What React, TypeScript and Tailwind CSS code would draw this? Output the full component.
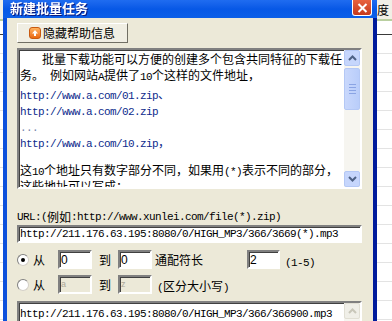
import React from 'react'

const cjk = "font-['Noto_Sans_CJK_SC',sans-serif]"

// SimSun-like mix: half-width Latin in a mono face, Chinese in the CJK face
const Mixed = ({ text }: { text: string }) => (
  <>
    {text
      .split(/([\x20-\x7e]+)/)
      .filter(Boolean)
      .map((part, i) =>
        /^[\x20-\x7e]+$/.test(part) ? (
          <span key={i} className="font-['Liberation_Mono',monospace] text-[11px] tracking-[-0.6px] whitespace-pre">
            {part}
          </span>
        ) : (
          <span key={i} className={`${cjk} text-[12px]`}>
            {part}
          </span>
        )
      )}
  </>
)

const BgStrip = ({ className, label }: { className: string; label?: string }) => (
  <div className={`flex flex-col h-full bg-white overflow-hidden ${className}`}>
    <div className="h-[19px] shrink-0 bg-[#f1efe6] text-[12px] leading-[19px] text-black whitespace-nowrap overflow-hidden">
      {label && <span className={cjk}>{label}</span>}
    </div>
    <div className="h-[2px] shrink-0 bg-[#b9cfa0]" />
    <div className="h-[14px] shrink-0 border-b border-[#3a3a3a]" />
    {Array.from({ length: 15 }).map((_, i) => (
      <div key={i} className="h-[19px] shrink-0 border-b border-[#e3e3e3]" />
    ))}
  </div>
)

const Sunken = ({ className, children }: { className: string; children?: React.ReactNode }) => (
  <div
    className={`border-2 border-t-[#808080] border-l-[#808080] border-b-white border-r-white shadow-[inset_1px_1px_0_#404040] ${className}`}
  >
    {children}
  </div>
)

const ScrollArrow = ({ up, disabled }: { up?: boolean; disabled?: boolean }) => (
  <div
    className={`w-[16px] h-[16px] rounded-[2px] border flex items-center justify-center ${
      disabled ? 'bg-[#f0efe8] border-[#e1dfd4]' : 'bg-[#c6d6fc] border-[#b4c8f5]'
    }`}
  >
    <svg width="9" height="6" viewBox="0 0 9 6">
      <path
        d={up ? 'M1 5 L4.5 1.5 L8 5' : 'M1 1 L4.5 4.5 L8 1'}
        fill="none"
        stroke={disabled ? '#c9c7ba' : '#4d6185'}
        strokeWidth="2"
      />
    </svg>
  </div>
)

const Radio = ({ checked }: { checked?: boolean }) => (
  <div className="w-[12px] h-[12px] rounded-full border border-t-[#808080] border-l-[#808080] border-b-[#d4d0c8] border-r-[#d4d0c8] bg-white flex items-center justify-center">
    {checked && <div className="w-[4px] h-[4px] rounded-full bg-black" />}
  </div>
)

const Field = ({ value, disabled, w }: { value: string; disabled?: boolean; w: string }) => (
  <Sunken className={`${w} h-[19px] flex items-center pl-[1px] ${disabled ? 'bg-[#ece9d8]' : 'bg-white'}`}>
    <span
      className={`font-['Liberation_Sans',sans-serif] ${disabled ? 'text-[9px] text-[#aca899]' : 'text-[12px] text-black'}`}
    >
      {value}
    </span>
  </Sunken>
)

export default function App() {
  return (
    <div className="w-[392px] h-[321px] overflow-hidden flex bg-white text-black">
      <BgStrip className="w-[3px] shrink-0" />

      <div className="w-[374px] shrink-0 flex flex-col h-full">
        {/* title bar */}
        <div className="h-[18px] shrink-0 bg-gradient-to-b from-[#1f6cf0] via-[#0758e6] to-[#0b5fe8] flex items-start justify-between pl-[7px] pr-[5px]">
          <span className={`${cjk} text-[13px] font-bold text-white leading-[16px] drop-shadow-[1px_1px_0_#0a1a80]`}>
            新建批量任务
          </span>
          <div className="w-[20px] h-[16px] rounded-b-[3px] border border-t-0 border-white bg-gradient-to-b from-[#e8623f] to-[#c4381c] flex items-center justify-center">
            <svg width="11" height="10" viewBox="0 0 11 10">
              <path d="M1.5 1 L9.5 9 M9.5 1 L1.5 9" stroke="#fff" strokeWidth="2" />
            </svg>
          </div>
        </div>

        <div className="flex flex-1 min-h-0">
          <div className="w-[4px] bg-[#0c50dc]" />

          <div className="flex-1 bg-[#ece9d8] pl-[10px] pr-[11px] pt-[5px] flex flex-col overflow-hidden">
            <button className="w-[111px] h-[20px] shrink-0 border border-t-white border-l-white border-b-[#716f64] border-r-[#716f64] bg-[#f0eee3] flex items-center pl-[11px] gap-[2px]">
              <span className="w-[12px] h-[12px] rounded-[3px] bg-gradient-to-b from-[#ffb15c] to-[#ea6a0c] border border-[#c85a10] flex items-center justify-center">
                <svg width="8" height="8" viewBox="0 0 8 8">
                  <path d="M4 1 L7 4.5 H5 V7 H3 V4.5 H1 Z" fill="#fff" />
                </svg>
              </span>
              <span className={`${cjk} text-[12px] leading-[14px]`}>隐藏帮助信息</span>
            </button>

            {/* help text */}
            <Sunken className="mt-[5px] h-[141px] shrink-0 bg-white flex overflow-hidden">
              <div className="flex-1 pl-[1px] overflow-hidden leading-[16px] whitespace-nowrap">
                <div className="h-[16px]">
                  <span className="inline-block w-[22px]" />
                  <Mixed text="批量下载功能可以方便的创建多个包含共同特征的下载任" />
                </div>
                <div className="h-[16px]">
                  <Mixed text="务。 例如网站A提供了10个这样的文件地址，" />
                </div>
                <div className="mt-[3px] text-[#0c2a8c]">
                  <div className="h-[16px]"><Mixed text="http://www.a.com/01.zip、" /></div>
                  <div className="h-[16px]"><Mixed text="http://www.a.com/02.zip" /></div>
                  <div className="h-[16px] text-[#7884aa]"><Mixed text="..." /></div>
                  <div className="h-[16px]"><Mixed text="http://www.a.com/10.zip，" /></div>
                </div>
                <div className="mt-[12px] h-[16px]">
                  <Mixed text="这10个地址只有数字部分不同，如果用(*)表示不同的部分，" />
                </div>
                <div className="h-[16px]">
                  <Mixed text="这些地址可以写成：" />
                </div>
              </div>
              <div className="w-[16px] shrink-0 bg-[#f6f5f0] flex flex-col justify-between">
                <div>
                  <ScrollArrow up />
                  <div className="mt-[2px] h-[42px] rounded-[2px] border border-[#b4c8f5] bg-gradient-to-r from-[#c9d8fc] to-[#b9cdfa] flex flex-col items-center justify-center gap-[2px]">
                    <div className="w-[7px] h-[1px] bg-[#8aa4e4]" />
                    <div className="w-[7px] h-[1px] bg-[#8aa4e4]" />
                    <div className="w-[7px] h-[1px] bg-[#8aa4e4]" />
                    <div className="w-[7px] h-[1px] bg-[#8aa4e4]" />
                  </div>
                </div>
                <ScrollArrow />
              </div>
            </Sunken>

            {/* url */}
            <div className="mt-[21px] h-[14px] shrink-0 flex items-center whitespace-nowrap">
              <Mixed text="URL:(例如:http://www.xunlei.com/file(*).zip)" />
            </div>
            <Sunken className="mt-[1px] h-[18px] shrink-0 bg-white flex items-center pl-[1px] whitespace-nowrap overflow-hidden">
              <Mixed text="http://211.176.63.195:8080/0/HIGH_MP3/366/3669(*).mp3" />
            </Sunken>

            {/* number range */}
            <div className="mt-[7px] h-[19px] shrink-0 flex items-center whitespace-nowrap">
              <Radio checked />
              <span className={`${cjk} text-[12px] ml-[4px]`}>从</span>
              <div className="ml-[13px]"><Field value="0" w="w-[34px]" /></div>
              <span className={`${cjk} text-[12px] ml-[7px]`}>到</span>
              <div className="ml-[7px]"><Field value="0" w="w-[34px]" /></div>
              <span className={`${cjk} text-[12px] ml-[3px]`}>通配符长</span>
              <div className="ml-[44px]"><Field value="2" w="w-[33px]" /></div>
              <span className="ml-[5px]"><Mixed text="(1-5)" /></span>
            </div>

            {/* letter range */}
            <div className="mt-[6px] h-[19px] shrink-0 flex items-center whitespace-nowrap">
              <Radio />
              <span className={`${cjk} text-[12px] ml-[4px]`}>从</span>
              <div className="ml-[13px]"><Field value="a" disabled w="w-[34px]" /></div>
              <span className={`${cjk} text-[12px] ml-[7px]`}>到</span>
              <div className="ml-[7px]"><Field value="z" disabled w="w-[34px]" /></div>
              <span className="ml-[5px]"><Mixed text="(区分大小写)" /></span>
            </div>

            {/* result list */}
            <Sunken className="mt-[7px] h-[40px] shrink-0 bg-white flex items-start">
              <div className="flex-1 min-w-0 pl-[1px] pt-[1px] h-[16px] leading-[14px] whitespace-nowrap overflow-hidden">
                <Mixed text="http://211.176.63.195:8080/0/HIGH_MP3/366/366900.mp3" />
              </div>
              <div className="w-[16px] shrink-0 h-[36px] bg-[#f6f5f0]">
                <ScrollArrow up disabled />
              </div>
            </Sunken>
          </div>

          <div className="w-[4px] bg-[#001b9c]" />
        </div>
      </div>

      <BgStrip className="flex-1" label="度" />
    </div>
  )
}
